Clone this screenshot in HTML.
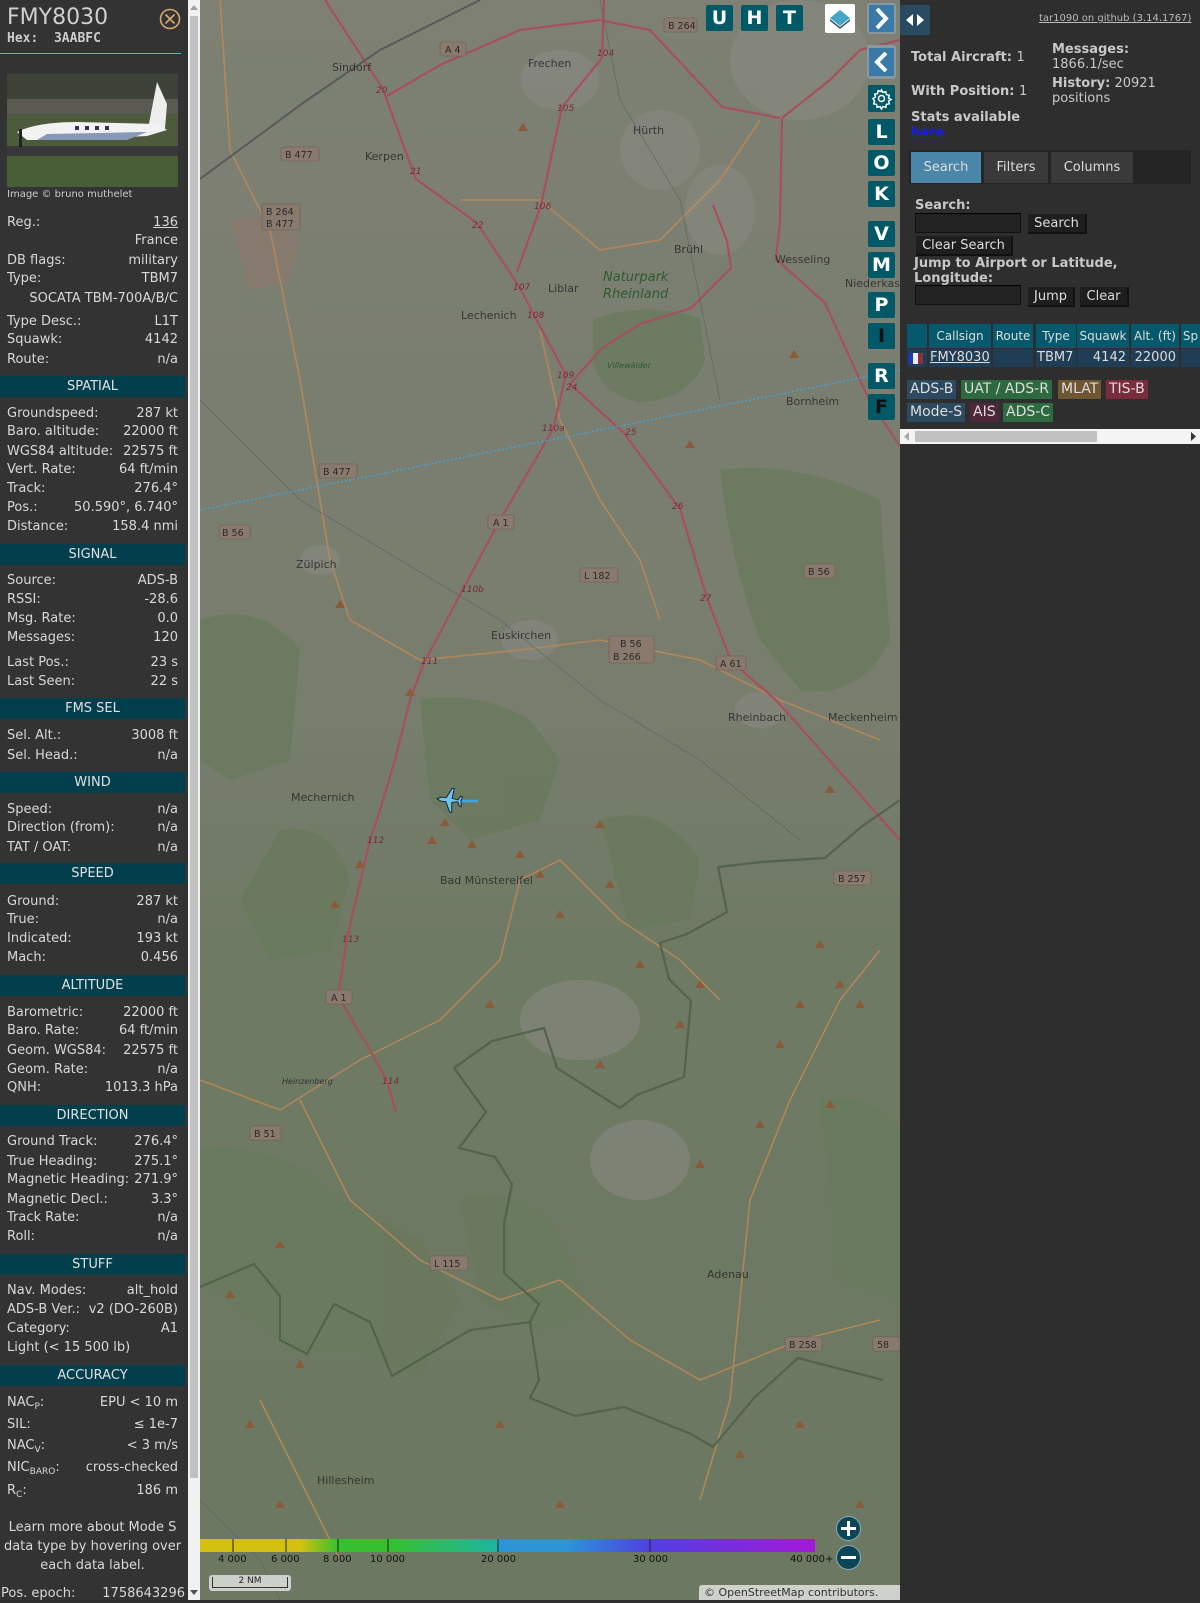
<!DOCTYPE html>
<html><head><meta charset="utf-8">
<style>
*{margin:0;padding:0;box-sizing:border-box}
html,body{width:1200px;height:1600px;overflow:hidden;background:#2e2e2e;font-family:"DejaVu Sans","Liberation Sans",sans-serif}
#left{position:absolute;left:0;top:0;width:188px;height:1600px;background:#333;color:#d8d8d8;font-size:13px}
.r{position:absolute;left:7px;width:171px;height:19px;line-height:19px;white-space:nowrap}
.r .v{position:absolute;right:0;top:0}
.h{position:absolute;left:0;width:185px;height:21px;line-height:21px;background:#013f4d;color:#e0e0e0;text-align:center;font-size:13px}
sub{font-size:9px;vertical-align:-3px}
#lsb{position:absolute;left:188px;top:0;width:12px;height:1600px;background:#f1f1f1}
#lsb .t{position:absolute;left:2px;top:16px;width:8px;height:1462px;background:#c1c1c1}
#map{position:absolute;left:200px;top:0;width:700px;height:1600px;overflow:hidden;background:#7c7f72}
.btn{position:absolute;width:27px;height:26px;background:#015968;color:#fff;font-weight:bold;font-size:19px;text-align:center;line-height:26px;border-radius:2px}
#right{position:absolute;left:900px;top:0;width:300px;height:1600px;background:#2e2e2e;color:#c8c8c8;font-size:13px}
.b{font-weight:bold}
.a{position:absolute;white-space:nowrap}
.tab{position:absolute;top:152px;height:31px;line-height:31px;text-align:center;background:#3a3a3a;color:#ddd;font-size:13px}
.inp{position:absolute;height:20px;background:#222;border:1px solid #111;border-top-color:#000}
.bt{position:absolute;height:20px;line-height:19px;background:#1e1e1e;color:#ddd;font-size:13px;text-align:center;border-right:2px solid #111;border-bottom:2px solid #111}
.th{position:absolute;top:324px;height:24px;line-height:24px;background:#045a6c;color:#ddd;font-size:12px;text-align:center}
.td{position:absolute;top:349px;height:18px;line-height:18px;background:#1f3d55;color:#ddd;font-size:13px}
.bd{position:absolute;height:19px;line-height:19px;font-size:14px;color:#ddd;padding:0 3px}
</style></head><body>
<div id="left">
<div class="a" style="left:7px;top:5px;font-size:22px;color:#d0d0d0;line-height:26px">FMY8030</div>
<div class="a" style="left:7px;top:31px;font-family:'DejaVu Sans Mono',monospace;font-weight:bold;font-size:13px;color:#ccc">Hex:&nbsp; 3AABFC</div>
<svg class="a" style="left:159px;top:8px" width="22" height="22" viewBox="0 0 22 22"><circle cx="11" cy="11" r="9.5" fill="none" stroke="#d8a870" stroke-width="1.6"/><path d="M6.5 6.5L15.5 15.5M15.5 6.5L6.5 15.5" stroke="#d8a870" stroke-width="1.6"/></svg>
<div class="a" style="left:0;top:53px;width:181px;height:1px;background:#4ab8d8"></div>
<svg class="a" style="left:7px;top:74px" width="171" height="113" viewBox="0 0 171 113">
<rect width="171" height="113" fill="#4e5a3c"/><rect width="171" height="40" fill="#5a5a52"/><rect y="0" width="171" height="25" fill="#3e4238"/><rect y="72" width="171" height="10" fill="#38383a"/><rect y="82" width="171" height="31" fill="#4a5e36"/>
<path d="M150 8L160 30L158 55L140 60Z" fill="#eee"/><path d="M10 58Q30 48 70 48L150 50L160 56L140 62L60 66L20 66Z" fill="#f2f2f2"/><path d="M40 60L140 58L120 66L30 66Z" fill="#8a98b8"/><rect x="12" y="55" width="3" height="18" fill="#222"/><rect x="68" y="52" width="4" height="4" fill="#335"/><rect x="78" y="52" width="4" height="4" fill="#335"/><rect x="88" y="52" width="4" height="4" fill="#335"/><rect x="98" y="52" width="4" height="4" fill="#335"/>
</svg>
<div class="a" style="left:7px;top:189px;font-size:10px;color:#ccc">Image © bruno muthelet</div>
<div class="r" style="top:213px">Reg.:<span class="v" style="text-decoration:underline">136</span></div>
<div class="r" style="top:231px"><span class="v">France</span></div>
<div class="r" style="top:251px">DB flags:<span class="v">military</span></div>
<div class="r" style="top:269px">Type:<span class="v">TBM7</span></div>
<div class="r" style="top:289px"><span class="v">SOCATA TBM-700A/B/C</span></div>
<div class="r" style="top:312px">Type Desc.:<span class="v">L1T</span></div>
<div class="r" style="top:330px">Squawk:<span class="v">4142</span></div>
<div class="r" style="top:350px">Route:<span class="v">n/a</span></div>
<div class="h" style="top:376px">SPATIAL</div>
<div class="r" style="top:404px">Groundspeed:<span class="v">287 kt</span></div>
<div class="r" style="top:422px">Baro. altitude:<span class="v">22000 ft</span></div>
<div class="r" style="top:442px">WGS84 altitude:<span class="v">22575 ft</span></div>
<div class="r" style="top:460px">Vert. Rate:<span class="v">64 ft/min</span></div>
<div class="r" style="top:479px">Track:<span class="v">276.4°</span></div>
<div class="r" style="top:498px">Pos.:<span class="v">50.590°, 6.740°</span></div>
<div class="r" style="top:517px">Distance:<span class="v">158.4 nmi</span></div>
<div class="h" style="top:544px">SIGNAL</div>
<div class="r" style="top:571px">Source:<span class="v">ADS-B</span></div>
<div class="r" style="top:590px">RSSI:<span class="v">-28.6</span></div>
<div class="r" style="top:609px">Msg. Rate:<span class="v">0.0</span></div>
<div class="r" style="top:628px">Messages:<span class="v">120</span></div>
<div class="r" style="top:653px">Last Pos.:<span class="v">23 s</span></div>
<div class="r" style="top:672px">Last Seen:<span class="v">22 s</span></div>
<div class="h" style="top:698px">FMS SEL</div>
<div class="r" style="top:726px">Sel. Alt.:<span class="v">3008 ft</span></div>
<div class="r" style="top:746px">Sel. Head.:<span class="v">n/a</span></div>
<div class="h" style="top:772px">WIND</div>
<div class="r" style="top:800px">Speed:<span class="v">n/a</span></div>
<div class="r" style="top:818px">Direction (from):<span class="v">n/a</span></div>
<div class="r" style="top:838px">TAT / OAT:<span class="v">n/a</span></div>
<div class="h" style="top:863px">SPEED</div>
<div class="r" style="top:892px">Ground:<span class="v">287 kt</span></div>
<div class="r" style="top:910px">True:<span class="v">n/a</span></div>
<div class="r" style="top:929px">Indicated:<span class="v">193 kt</span></div>
<div class="r" style="top:948px">Mach:<span class="v">0.456</span></div>
<div class="h" style="top:975px">ALTITUDE</div>
<div class="r" style="top:1003px">Barometric:<span class="v">22000 ft</span></div>
<div class="r" style="top:1021px">Baro. Rate:<span class="v">64 ft/min</span></div>
<div class="r" style="top:1041px">Geom. WGS84:<span class="v">22575 ft</span></div>
<div class="r" style="top:1060px">Geom. Rate:<span class="v">n/a</span></div>
<div class="r" style="top:1078px">QNH:<span class="v">1013.3 hPa</span></div>
<div class="h" style="top:1105px">DIRECTION</div>
<div class="r" style="top:1132px">Ground Track:<span class="v">276.4°</span></div>
<div class="r" style="top:1152px">True Heading:<span class="v">275.1°</span></div>
<div class="r" style="top:1170px">Magnetic Heading:<span class="v">271.9°</span></div>
<div class="r" style="top:1190px">Magnetic Decl.:<span class="v">3.3°</span></div>
<div class="r" style="top:1208px">Track Rate:<span class="v">n/a</span></div>
<div class="r" style="top:1227px">Roll:<span class="v">n/a</span></div>
<div class="h" style="top:1254px">STUFF</div>
<div class="r" style="top:1281px">Nav. Modes:<span class="v">alt_hold</span></div>
<div class="r" style="top:1300px">ADS-B Ver.:<span class="v">v2 (DO-260B)</span></div>
<div class="r" style="top:1319px">Category:<span class="v">A1</span></div>
<div class="r" style="top:1338px">Light (&lt; 15 500 lb)</div>
<div class="h" style="top:1365px">ACCURACY</div>
<div class="r" style="top:1393px">NAC<sub>P</sub>:<span class="v">EPU &lt; 10 m</span></div>
<div class="r" style="top:1415px">SIL:<span class="v">≤ 1e-7</span></div>
<div class="r" style="top:1436px">NAC<sub>V</sub>:<span class="v">&lt; 3 m/s</span></div>
<div class="r" style="top:1458px">NIC<sub>BARO</sub>:<span class="v">cross-checked</span></div>
<div class="r" style="top:1481px">R<sub>C</sub>:<span class="v">186 m</span></div>
<div class="a" style="left:0;top:1518px;width:185px;text-align:center;line-height:19px;white-space:normal">Learn more about Mode S data type by hovering over each data label.</div>
<div class="r" style="top:1584px;left:1px;width:184px">Pos. epoch:<span class="v">1758643296</span></div>
</div>
<div id="lsb"><div class="t"></div>
<svg class="a" style="left:2px;top:4px" width="8" height="6"><path d="M0 6L4 1L8 6Z" fill="#a0a0a0"/></svg>
<svg class="a" style="left:2px;top:1590px" width="8" height="6"><path d="M0 0L4 5L8 0Z" fill="#505050"/></svg></div>

<div id="map">
<svg width="700" height="1600" viewBox="200 0 700 1600" style="position:absolute;left:0;top:0">
<defs><linearGradient id="g" x1="0" y1="0" x2="0" y2="1"><stop offset="0" stop-color="#7d8073"/><stop offset="0.45" stop-color="#787d6e"/><stop offset="0.6" stop-color="#6e7a63"/><stop offset="1" stop-color="#6c7862"/></linearGradient></defs>
<rect x="200" y="0" width="700" height="1600" fill="url(#g)"/>
<g fill="#6a7a5e" opacity="0.85">
<path d="M593 320Q640 300 700 318L705 360Q690 400 640 402Q600 395 593 360Z"/>
<path d="M720 470Q800 460 880 500L890 640Q860 700 800 690L760 640Q730 560 720 470Z"/>
<path d="M200 620Q260 600 300 650L290 760L230 780L200 760Z"/>
<path d="M420 700Q480 690 530 720L560 760L540 820L470 840L430 800Z"/>
<path d="M200 1150Q280 1140 340 1200L420 1240L460 1300L420 1380L360 1350L290 1350L230 1300L200 1280Z"/>
<path d="M460 1200Q520 1180 560 1240L590 1310L540 1330L480 1300Z"/>
<path d="M280 830Q330 820 350 880L330 950L270 960L240 900Z"/>
<path d="M600 820Q660 800 700 860L690 920L630 930Z"/>
<path d="M820 1100Q870 1090 900 1130L900 1300L840 1280Z"/>
<path d="M230 220Q270 210 300 240L290 280L250 290Z" fill="#8a7a70"/>
</g>
<g fill="#8a8a84" opacity="0.55">
<ellipse cx="530" cy="640" rx="28" ry="20"/><ellipse cx="560" cy="80" rx="40" ry="30"/><ellipse cx="660" cy="150" rx="40" ry="40"/><ellipse cx="720" cy="210" rx="35" ry="45"/><ellipse cx="800" cy="60" rx="70" ry="60"/><ellipse cx="760" cy="710" rx="25" ry="18"/><ellipse cx="580" cy="1020" rx="60" ry="40"/><ellipse cx="640" cy="1160" rx="50" ry="40"/><ellipse cx="320" cy="560" rx="20" ry="15"/>
</g>
<g fill="none" stroke="#c08a55" stroke-width="1.6" opacity="0.8">
<path d="M220 0L230 150L270 230L300 380L320 500L330 560L350 620L420 660L520 650L600 640L700 660L780 700L880 740"/>
<path d="M460 200L540 200L600 250L660 240L720 180L760 120"/>
<path d="M540 330L560 420L600 500L640 560L660 620"/>
<path d="M200 1080L280 1110L360 1060L440 1020L500 960L520 880L560 860L620 920L680 960L720 1000"/>
<path d="M700 1500L730 1400L740 1300L750 1200L790 1100L840 1000L880 950"/>
<path d="M300 1100L350 1200L420 1260L500 1300L560 1280L630 1340L700 1380L800 1340L880 1320"/>
<path d="M260 1400L300 1480L340 1560"/>
</g>
<g fill="none" stroke="#a6505e" stroke-width="2.2">
<path d="M325 0L383 89L405 150L416 179L477 223L519 286L535 317L566 375L553 429L499 522L463 589L423 665L410 700L395 760L380 810L370 840L347 938L338 996L370 1050L387 1081L396 1112"/>
<path d="M570 384L624 433L680 509L707 598L731 661L776 700L870 806L900 840"/>
<path d="M517 272L541 205L562 107L602 58L604 0"/>
<path d="M387 96L440 65L520 30L600 20L650 30L722 107L780 118"/>
<path d="M570 384L602 348L640 324L691 308L731 268L727 241L713 205"/>
<path d="M782 118L780 223L776 259L825 303L870 402L900 446"/>
<path d="M782 118L830 80L860 50L900 40"/>
</g>
<path d="M200 179L303 103L380 50L480 0" stroke="#5a5a5a" stroke-width="2" fill="none"/>
<g fill="none" stroke="#50604a" stroke-width="2.2" opacity="0.9">
<path d="M454 1068L492 1041L544 1028L557 1068L620 1108L637 1095L684 1077L691 1001L669 979L660 943L687 934L727 912L718 867L762 862L825 858L861 827L900 800"/>
<path d="M454 1068L486 1112L459 1148L495 1157L512 1184L504 1224L504 1273L539 1304L530 1322L470 1330L392 1376L370 1322L334 1304L307 1354L280 1340L280 1296L254 1264L200 1287"/>
<path d="M530 1322L539 1380L530 1398L575 1416L624 1407L691 1434L713 1447L754 1398L798 1358L883 1380"/>
</g>
<g fill="none" stroke="#59606a" stroke-width="1" opacity="0.6">
<path d="M200 400L300 500L400 560L500 620L600 700L700 760L800 840"/><path d="M600 0L620 100L680 200L700 300L720 400"/><path d="M200 1500L260 1560L280 1600"/>
</g>
<g fill="#8a5a3a">
<path d="M523 123l5 8h-10z"/><path d="M410 688l5 8h-10z"/><path d="M432 836l5 8h-10z"/><path d="M445 818l5 8h-10z"/><path d="M472 840l5 8h-10z"/><path d="M520 850l5 8h-10z"/><path d="M540 870l5 8h-10z"/><path d="M600 820l5 8h-10z"/><path d="M610 880l5 8h-10z"/><path d="M560 910l5 8h-10z"/><path d="M640 960l5 8h-10z"/><path d="M700 980l5 8h-10z"/><path d="M680 1020l5 8h-10z"/><path d="M820 940l5 8h-10z"/><path d="M840 980l5 8h-10z"/><path d="M800 1000l5 8h-10z"/><path d="M780 1040l5 8h-10z"/><path d="M860 1000l5 8h-10z"/><path d="M760 1120l5 8h-10z"/><path d="M700 1160l5 8h-10z"/><path d="M830 1100l5 8h-10z"/><path d="M335 900l5 8h-10z"/><path d="M280 1240l5 8h-10z"/><path d="M230 1290l5 8h-10z"/><path d="M300 1360l5 8h-10z"/><path d="M280 1500l5 8h-10z"/><path d="M500 1420l5 8h-10z"/><path d="M560 1500l5 8h-10z"/><path d="M740 1450l5 8h-10z"/><path d="M800 1420l5 8h-10z"/><path d="M860 1500l5 8h-10z"/><path d="M600 1060l5 8h-10z"/><path d="M490 1000l5 8h-10z"/><path d="M360 860l5 8h-10z"/><path d="M830 785l5 8h-10z"/><path d="M690 440l5 8h-10z"/><path d="M794 350l5 8h-10z"/><path d="M340 600l5 8h-10z"/><path d="M250 1420l5 8h-10z"/></g>
<path d="M200 510L900 370" stroke="#3aa8e8" stroke-width="1.2" stroke-dasharray="2 2"/>
<path d="M455 801L478 801" stroke="#3aa8e8" stroke-width="2.5"/>
<g transform="translate(449 800) rotate(-84)" fill="#6ec6ec" stroke="#1a2630" stroke-width="1">
<path d="M0 -12L2 -8L2 -3L12 2L12 4L2 3L1 9L5 11L5 13L0 12L-5 13L-5 11L-1 9L-2 3L-12 4L-12 2L-2 -3L-2 -8Z"/></g>
<g font-family="DejaVu Sans,sans-serif" font-size="11" fill="#2a2a2a" opacity="0.85">
<text x="332" y="71">Sindorf</text><text x="528" y="67">Frechen</text><text x="365" y="160">Kerpen</text><text x="633" y="134">Hürth</text><text x="674" y="253">Brühl</text><text x="775" y="263">Wesseling</text><text x="845" y="287">Niederkas</text><text x="548" y="292">Liblar</text><text x="461" y="319">Lechenich</text><text x="786" y="405">Bornheim</text><text x="296" y="568">Zülpich</text><text x="491" y="639">Euskirchen</text><text x="728" y="721">Rheinbach</text><text x="828" y="721">Meckenheim</text><text x="291" y="801">Mechernich</text><text x="440" y="884">Bad Münstereifel</text><text x="707" y="1278">Adenau</text><text x="317" y="1484">Hillesheim</text>
</g>
<g font-family="DejaVu Sans,sans-serif" font-style="italic" fill="#2e5a30"><text x="603" y="281" font-size="13">Naturpark</text><text x="603" y="298" font-size="13">Rheinland</text><text x="607" y="368" font-size="8">Villewälder</text></g>
<text x="282" y="1084" font-family="DejaVu Sans,sans-serif" font-style="italic" font-size="8" fill="#333">Heinzenberg</text>
<g font-family="DejaVu Sans,sans-serif" font-size="9.5" fill="#2a2a2a">
<g fill="#8a7a6e" stroke="#6a5a52" stroke-width="0.6"><rect x="440" y="42" width="26" height="14" rx="2"/><rect x="664" y="18" width="33" height="14" rx="2"/><rect x="281" y="147" width="38" height="14" rx="2"/><rect x="262" y="204" width="38" height="26" rx="2"/><rect x="319" y="464" width="38" height="14" rx="2"/><rect x="219" y="525" width="31" height="14" rx="2"/><rect x="488" y="515" width="26" height="14" rx="2"/><rect x="580" y="568" width="38" height="14" rx="2"/><rect x="609" y="636" width="45" height="27" rx="2"/><rect x="716" y="656" width="30" height="14" rx="2"/><rect x="804" y="564" width="31" height="14" rx="2"/><rect x="834" y="871" width="37" height="14" rx="2"/><rect x="326" y="990" width="26" height="14" rx="2"/><rect x="250" y="1126" width="31" height="14" rx="2"/><rect x="430" y="1256" width="38" height="14" rx="2"/><rect x="785" y="1337" width="37" height="14" rx="2"/><rect x="873" y="1337" width="27" height="14" rx="2"/></g>
<text x="445" y="53">A 4</text><text x="668" y="29">B 264</text><text x="285" y="158">B 477</text><text x="266" y="215">B 264</text><text x="266" y="227">B 477</text><text x="323" y="475">B 477</text><text x="222" y="536">B 56</text><text x="493" y="526">A 1</text><text x="584" y="579">L 182</text><text x="620" y="647">B 56</text><text x="613" y="660">B 266</text><text x="720" y="667">A 61</text><text x="808" y="575">B 56</text><text x="838" y="882">B 257</text><text x="331" y="1001">A 1</text><text x="254" y="1137">B 51</text><text x="434" y="1267">L 115</text><text x="789" y="1348">B 258</text><text x="877" y="1348">58</text>
</g>
<g font-family="DejaVu Sans,sans-serif" font-style="italic" font-size="9" fill="#7a2a36"><text x="376" y="93">20</text><text x="410" y="174">21</text><text x="472" y="228">22</text><text x="513" y="290">107</text><text x="527" y="318">108</text><text x="557" y="378">109</text><text x="542" y="431">110a</text><text x="461" y="592">110b</text><text x="421" y="664">111</text><text x="367" y="843">112</text><text x="342" y="942">113</text><text x="382" y="1084">114</text><text x="534" y="209">106</text><text x="557" y="111">105</text><text x="597" y="56">104</text><text x="625" y="435">25</text><text x="672" y="509">26</text><text x="700" y="601">27</text><text x="566" y="390">24</text></g>
</svg>
<div class="btn" style="left:506px;top:5px">U</div>
<div class="btn" style="left:541px;top:5px">H</div>
<div class="btn" style="left:576px;top:5px">T</div>
<div class="a" style="left:625px;top:4px;width:30px;height:29px;background:#fff;border-radius:2px"><svg width="30" height="29"><path d="M15 6L25 14L15 22L5 14Z" fill="#46a6c8"/><path d="M5 15L15 23L25 15L25 17L15 25L5 17Z" fill="#3a5a6a"/></svg></div>
<div class="a" style="left:667px;top:3px;width:29px;height:31px;background:#8a98a0;border-radius:3px"><div style="position:absolute;left:2px;top:2px;width:25px;height:27px;background:#3a7aa8"></div><svg class="a" style="left:0;top:0" width="29" height="31"><path d="M10 6L19 15.5L10 25" fill="none" stroke="#fff" stroke-width="4"/></svg></div>
<div class="a" style="left:667px;top:45px;width:29px;height:34px;background:#8a98a0;border-radius:3px"><div style="position:absolute;left:2px;top:3px;width:25px;height:28px;background:#3a7aa8"></div><svg class="a" style="left:0;top:0" width="29" height="34"><path d="M19 8L10 17L19 26" fill="none" stroke="#fff" stroke-width="4"/></svg></div>
<div class="btn" style="left:668px;top:85px;height:27px"><svg width="27" height="27"><g fill="none" stroke="#fff" stroke-width="1.5"><circle cx="13.5" cy="13.5" r="3"/><path d="M13.5 5l1.5 2.5 2.8-.8.6 2.9 2.9.6-.8 2.8 2.5 1.5-2.5 1.5.8 2.8-2.9.6-.6 2.9-2.8-.8-1.5 2.5-1.5-2.5-2.8.8-.6-2.9-2.9-.6.8-2.8L5 13.5l2.5-1.5-.8-2.8 2.9-.6.6-2.9 2.8.8z"/></g></svg></div>
<div class="btn" style="left:668px;top:119px">L</div>
<div class="btn" style="left:668px;top:150px">O</div>
<div class="btn" style="left:668px;top:181px">K</div>
<div class="btn" style="left:668px;top:221px">V</div>
<div class="btn" style="left:668px;top:252px">M</div>
<div class="btn" style="left:668px;top:292px">P</div>
<div class="btn" style="left:668px;top:323px;color:#111">I</div>
<div class="btn" style="left:668px;top:363px">R</div>
<div class="btn" style="left:668px;top:394px;color:#111">F</div>
<div class="a" style="left:0;top:1539px;width:615px;height:13px;background:linear-gradient(90deg,#d4c10f 0,#d4c10f 100px,#35c12d 138px,#35c12d 188px,#1db5a0 298px,#2a96d8 300px,#2a96d8 366px,#5040e0 450px,#a418d8 615px)"></div>
<svg class="a" style="left:0;top:1539px" width="615" height="13"><g stroke="#222" stroke-width="1"><path d="M33 0V13M86 0V13M138 0V13M188 0V13M298 0V13M450 0V13"/></g></svg>
<div class="a" style="left:0;top:1554px;width:640px;height:14px;font-size:10px;color:#111;font-family:'DejaVu Sans',sans-serif">
<span class="a" style="left:18px">4 000</span><span class="a" style="left:71px">6 000</span><span class="a" style="left:123px">8 000</span><span class="a" style="left:170px">10 000</span><span class="a" style="left:281px">20 000</span><span class="a" style="left:433px">30 000</span><span class="a" style="left:590px">40 000+</span></div>
<div class="a" style="left:636px;top:1516px;width:25px;height:25px;border-radius:50%;background:#0a4656;border:1px solid #8ab"><svg width="23" height="23"><path d="M11.5 4V19M4 11.5H19" stroke="#fff" stroke-width="3"/></svg></div>
<div class="a" style="left:636px;top:1545px;width:25px;height:25px;border-radius:50%;background:#0a4656;border:1px solid #8ab"><svg width="23" height="23"><path d="M4 11.5H19" stroke="#fff" stroke-width="3"/></svg></div>
<div class="a" style="left:9px;top:1575px;width:82px;height:16px;background:rgba(230,230,230,0.8);border-radius:3px"><div style="margin:2px 3px;height:11px;border:1px solid #333;border-top:none;font-size:9px;text-align:center;line-height:9px;color:#222">2 NM</div></div>
<div class="a" style="left:499px;top:1585px;width:201px;height:15px;background:rgba(225,225,225,0.85);font-size:11px;color:#333;line-height:15px;padding-left:5px;border-radius:3px 0 0 0">© OpenStreetMap contributors.</div>
</div>

<div id="right">
<svg class="a" style="left:0;top:5px" width="30" height="30"><rect width="30" height="30" rx="2" fill="#2a4a62"/><path d="M13 9L6 15L13 21ZM17 9L24 15L17 21Z" fill="#fff"/></svg>
<div class="a" style="left:139px;top:13px;font-size:10px;text-decoration:underline;color:#bbb">tar1090 on github (3.14.1767)</div>
<div class="a b" style="left:11px;top:50px">Total Aircraft: <span style="font-weight:normal">1</span></div>
<div class="a b" style="left:11px;top:84px">With Position: <span style="font-weight:normal">1</span></div>
<div class="a b" style="left:152px;top:42px">Messages:</div>
<div class="a" style="left:152px;top:57px">1866.1/sec</div>
<div class="a" style="left:152px;top:76px"><b>History:</b> 20921</div>
<div class="a" style="left:152px;top:91px">positions</div>
<div class="a b" style="left:11px;top:110px">Stats available</div>
<div class="a b" style="left:11px;top:125px;color:#1a1aee;text-decoration:underline">here</div>
<div class="a" style="left:9px;top:150px;width:282px;height:34px;background:#252525"></div>
<div class="tab" style="left:11px;width:70px;background:#4a86a8">Search</div>
<div class="tab" style="left:84px;width:64px">Filters</div>
<div class="tab" style="left:151px;width:82px">Columns</div>
<div class="a b" style="left:15px;top:198px">Search:</div>
<div class="inp" style="left:15px;top:213px;width:106px"></div>
<div class="bt" style="left:128px;top:214px;width:59px">Search</div>
<div class="bt" style="left:16px;top:236px;width:97px">Clear Search</div>
<div class="a b" style="left:14px;top:256px">Jump to Airport or Latitude,</div>
<div class="a b" style="left:14px;top:271px">Longitude:</div>
<div class="inp" style="left:15px;top:285px;width:106px"></div>
<div class="bt" style="left:128px;top:287px;width:47px">Jump</div>
<div class="bt" style="left:180px;top:287px;width:49px">Clear</div>
<div class="th" style="left:7px;width:20px"></div>
<div class="th" style="left:29px;width:62px">Callsign</div>
<div class="th" style="left:93px;width:40px">Route</div>
<div class="th" style="left:136px;width:40px">Type</div>
<div class="th" style="left:177px;width:52px">Squawk</div>
<div class="th" style="left:231px;width:48px">Alt. (ft)</div>
<div class="th" style="left:281px;width:19px">Sp</div>
<div class="td" style="left:7px;width:20px"><svg width="20" height="18"><rect x="2" y="4" width="4" height="11" fill="#2233cc"/><rect x="6" y="4" width="5" height="11" fill="#eee"/><rect x="11" y="4" width="5" height="11" fill="#8a3040"/></svg></div>
<div class="td" style="left:29px;width:62px;text-decoration:underline;padding-left:1px">FMY8030</div>
<div class="td" style="left:93px;width:40px"></div>
<div class="td" style="left:136px;width:40px;padding-left:1px">TBM7</div>
<div class="td" style="left:177px;width:52px;text-align:right;padding-right:3px">4142</div>
<div class="td" style="left:231px;width:48px;text-align:right;padding-right:3px">22000</div>
<div class="td" style="left:281px;width:19px"></div>
<div class="bd" style="left:7px;top:380px;background:#2c4a60">ADS-B</div>
<div class="bd" style="left:61px;top:380px;background:#2e6a40">UAT / ADS-R</div>
<div class="bd" style="left:158px;top:380px;background:#6e5632">MLAT</div>
<div class="bd" style="left:206px;top:380px;background:#7a2c3a">TIS-B</div>
<div class="bd" style="left:7px;top:403px;background:#2c4a60">Mode-S</div>
<div class="bd" style="left:70px;top:403px;background:#4e2838">AIS</div>
<div class="bd" style="left:103px;top:403px;background:#2e6a40">ADS-C</div>
<div class="a" style="left:0;top:429px;width:300px;height:15px;background:#f4f4f4"><div style="position:absolute;left:15px;top:2px;width:182px;height:11px;background:#c1c1c1"></div><svg class="a" style="left:3px;top:3px" width="6" height="9"><path d="M6 0L1 4.5L6 9Z" fill="#aaa"/></svg><svg class="a" style="left:291px;top:3px" width="6" height="9"><path d="M0 0L5 4.5L0 9Z" fill="#333"/></svg></div>
</div>
</body></html>
